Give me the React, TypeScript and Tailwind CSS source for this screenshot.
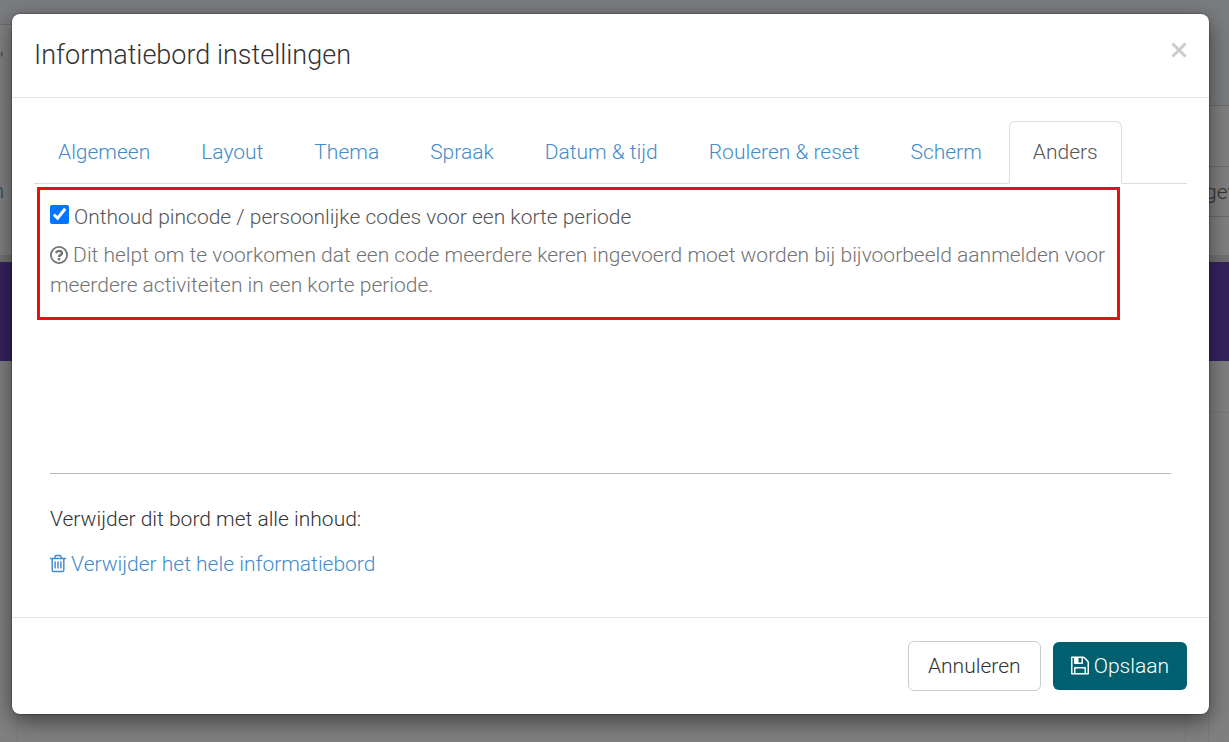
import React, { useState } from 'react';

const tabs = [
  'Algemeen',
  'Layout',
  'Thema',
  'Spraak',
  'Datum & tijd',
  'Rouleren & reset',
  'Scherm',
  'Anders',
];

const QuestionIcon = () => (
  <svg viewBox="0 0 24 24" className="inline-block w-[18px] h-[18px] align-[-2px]" fill="none" stroke="currentColor" aria-hidden="true">
    <circle cx="12" cy="12" r="10.8" strokeWidth="2.4" />
    <path d="M7.7 9.300C8.900 7.300 10.200 6.500 12 6.500c2.200 0 3.900 1.200 3.900 3.100 0 2.800-3.900 2.400-3.900 4.900" strokeWidth="3.200" />
    <path d="M10.400 16h3.200v3.200h-3.200z" fill="currentColor" stroke="none" />
  </svg>
);

const TrashIcon = () => (
  <svg viewBox="0 0 1408 1792" className="inline-block w-4 h-[21px] align-[-3px]" fill="currentColor" aria-hidden="true">
    <path d="M512 736v576q0 14-9 23t-23 9h-64q-14 0-23-9t-9-23v-576q0-14 9-23t23-9h64q14 0 23 9t9 23zm256 0v576q0 14-9 23t-23 9h-64q-14 0-23-9t-9-23v-576q0-14 9-23t23-9h64q14 0 23 9t9 23zm256 0v576q0 14-9 23t-23 9h-64q-14 0-23-9t-9-23v-576q0-14 9-23t23-9h64q14 0 23 9t9 23zm128 724v-948h-896v948q0 22 7 40.5t14.5 27 10.5 8.5h832q3 0 10.5-8.5t14.500-27 7-40.500zm-672-1076h448l-48-117q-7-9-17-11h-317q-10 2-17 11zm928 32v64q0 14-9 23t-23 9h-96v948q0 83-47 143.500t-113 60.500h-832q-66 0-113-58.500t-47-141.500v-952h-96q-14 0-23-9t-9-23v-64q0-14 9-23t23-9h309l70-167q15-37 54-63t79-26h320q40 0 79 26t54 63l70 167h309q14 0 23 9t9 23z" />
  </svg>
);

const SaveIcon = () => (
  <svg viewBox="128 0 1536 1792" className="inline-block w-[18px] h-[21px] align-[-3px]" fill="currentColor" aria-hidden="true">
    <path d="M512 1536h768v-384h-768v384zm896 0h128v-896q0-14-10-38.500t-20-34.500l-281-281q-10-10-34-20t-39-10v416q0 40-28 68t-68 28h-576q-40 0-68-28t-28-68v-416h-128v1280h128v-416q0-40 28-68t68-28h832q40 0 68 28t28 68v416zm-384-928v-320q0-13-9.500-22.500t-22.500-9.500h-192q-13 0-22.500 9.500t-9.500 22.500v320q0 13 9.500 22.500t22.500 9.500h192q13 0 22.500-9.500t9.500-22.500zm640 32v928q0 40-28 68t-68 28h-1344q-40 0-68-28t-28-68v-1344q0-40 28-68t68-28h928q40 0 88 20t76 48l280 280q28 28 48 76t20 88z" />
  </svg>
);

// Dimmed page that stays visible around the dialog
const PageBehind = () => (
  <div className="absolute inset-0 flex justify-between overflow-hidden bg-[#808080]" aria-hidden="true">
    <div className="flex flex-1 flex-col">
      <div className="h-[25px] border-b border-[#6c6c6c] bg-[#7b7c80]" />
      <div className="h-[230px] pt-5 text-[21px] leading-[30px] text-[#333]">
        <div>'</div>
        <div className="flex w-1 justify-end pt-[101px] text-[#21466a]">n</div>
      </div>
      <div className="h-[7px] bg-[#727272]" />
      <div className="h-[99px] bg-[#35235f]" />
      <div className="ml-[17px] flex-1 border-l border-[#787878]" />
    </div>
    <div className="flex flex-1 flex-col">
      <div className="h-[106px] border-b border-[#6c6c6c] bg-[#7b7c80]" />
      <div className="h-[61px] border-b border-[#6c6c6c]" />
      <div className="flex h-[50px] items-center justify-end border-b border-[#6c6c6c] text-[21px] text-[#333]">
        <span className="w-6">gev</span>
      </div>
      <div className="h-[38px]" />
      <div className="h-[7px] bg-[#727272]" />
      <div className="h-[99px] bg-[#35235f]" />
      <div className="h-[52px] border-b border-[#787878]" />
      <div className="mr-5 flex-1 border-r border-[#787878] pr-[22px]">
        <div className="h-full border-r border-[#787878]" />
      </div>
    </div>
  </div>
);

const App: React.FC = () => {
  const [activeTab, setActiveTab] = useState('Anders');
  const [remember, setRemember] = useState(true);

  return (
    <div className="relative min-h-screen overflow-hidden pt-[14px] pr-5 pb-7 pl-3 font-[Roboto,sans-serif] text-[21px] leading-[30px] font-light text-[#333]">
      <PageBehind />

      <div
        role="dialog"
        aria-labelledby="dialog-title"
        className="relative rounded-lg bg-white shadow-[0_7px_22px_rgba(0,0,0,0.5),0_0_1px_1px_rgba(0,0,0,0.2)]"
      >
        {/* Header */}
        <div className="flex items-start justify-between border-b border-[#e5e5e5] px-[22px] pt-[22px] pb-[23px]">
          <h4 id="dialog-title" className="text-[27px] leading-[38px]">
            Informatiebord instellingen
          </h4>
          <button type="button" aria-label="Sluiten" className="-mt-px text-[#ccc]">
            <svg viewBox="0 0 16 30" className="h-[30px] w-4" fill="none" stroke="currentColor" strokeWidth="3" aria-hidden="true">
              <path d="M1.500 8.500l13 13M14.500 8.500l-13 13" />
            </svg>
          </button>
        </div>

        {/* Body */}
        <div className="px-[22px] pt-[23px] pb-[38px]">
          <div role="tablist" className="flex gap-[3px] border-b border-[#ddd]">
            {tabs.map((tab) => (
              <button
                key={tab}
                type="button"
                role="tab"
                aria-selected={activeTab === tab}
                onClick={() => setActiveTab(tab)}
                className={`-mb-px rounded-t-md border px-[23px] pt-[15px] pb-4 whitespace-nowrap ${
                  activeTab === tab ? 'border-[#ddd] border-b-white bg-white text-[#555]' : 'border-transparent text-[#428bca]'
                }`}
              >
                {tab}
              </button>
            ))}
          </div>

          <div className="mt-[3px] mr-[67px] ml-[3px] border-3 border-[#f00d0d] pt-3 pr-2 pb-[17px] pl-[10px]">
            <div className="flex items-start gap-[5px] text-[#555]">
              <input
                id="remember"
                type="checkbox"
                checked={remember}
                onChange={() => setRemember(!remember)}
                className="mt-[3px] h-[19px] w-[19px] accent-[#0075ff]"
              />
              <label htmlFor="remember">Onthoud pincode / persoonlijke codes voor een korte periode</label>
            </div>
            <p className="mt-2 text-[#737373]">
              <QuestionIcon /> Dit helpt om te voorkomen dat een code meerdere keren ingevoerd moet worden bij bijvoorbeeld aanmelden voor
              meerdere activiteiten in een korte periode.
            </p>
          </div>

          <div className="mx-4 mt-[153px] border-t border-[#bbb] pt-[30px]">
            <p>Verwijder dit bord met alle inhoud:</p>
            <a href="#verwijder" className="mt-[15px] inline-block text-[#428bca]">
              <TrashIcon /> Verwijder het hele informatiebord
            </a>
          </div>
        </div>

        {/* Footer */}
        <div className="flex items-center justify-end gap-3 border-t border-[#e5e5e5] px-[22px] py-[23px]">
          <button type="button" className="rounded-md border border-[#ccc] bg-white px-[19px] py-[9px]">
            Annuleren
          </button>
          <button type="button" className="rounded-md bg-[#006070] px-[18px] py-[9px] text-white">
            <SaveIcon /> Opslaan
          </button>
        </div>
      </div>
    </div>
  );
};

export default App;
